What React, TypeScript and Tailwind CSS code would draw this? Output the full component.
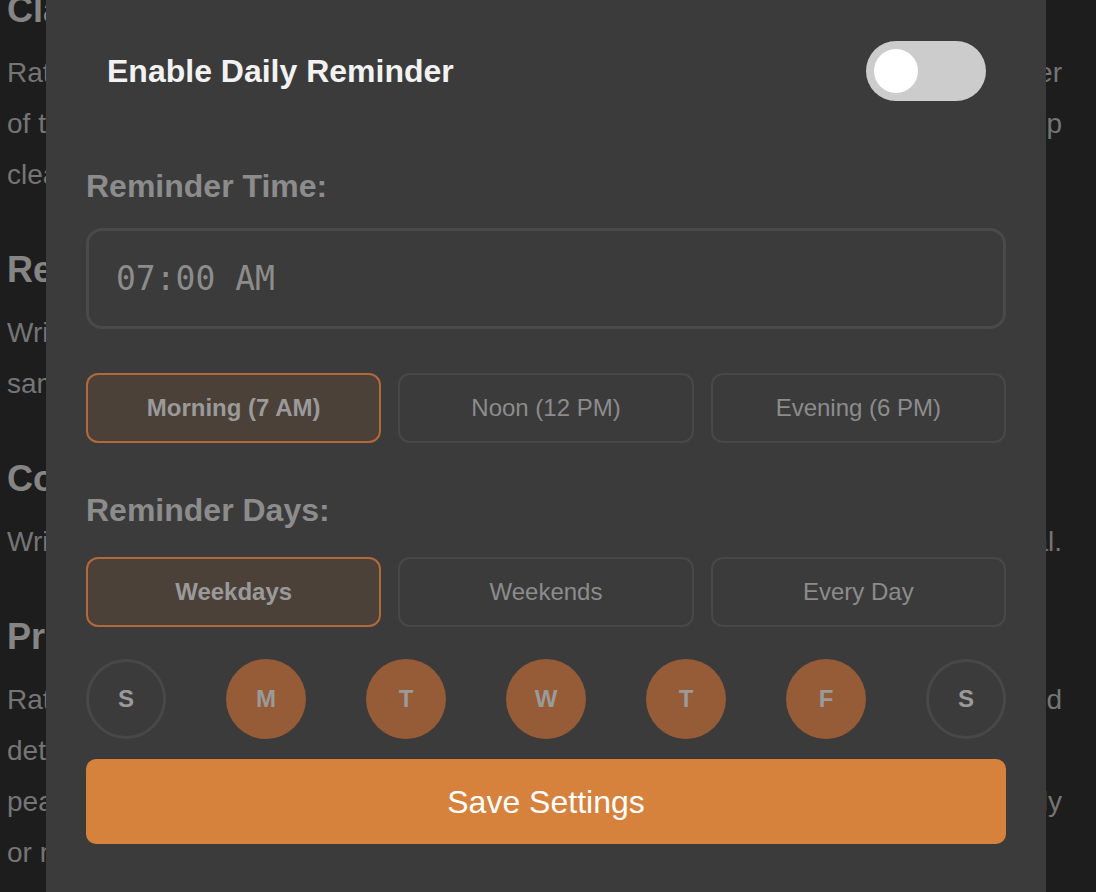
import { useState } from "react";

const PRESET_TIMES = ["Morning (7 AM)", "Noon (12 PM)", "Evening (6 PM)"];
const PRESET_DAYS = ["Weekdays", "Weekends", "Every Day"];
const DAYS = [
  { key: "sun", label: "S", on: false },
  { key: "mon", label: "M", on: true },
  { key: "tue", label: "T", on: true },
  { key: "wed", label: "W", on: true },
  { key: "thu", label: "T", on: true },
  { key: "fri", label: "F", on: true },
  { key: "sat", label: "S", on: false },
];

// Page content sitting behind the settings modal.
// `end` is the tail of a line that runs up to the right edge of the column.
const SECTIONS = [
  {
    title: "Clarity",
    lines: [
      { text: "Rate the clarity of your thoughts today, and note if they felt", end: "clearer" },
      { text: "of the day's decisions came easily. A morning journaling routine", end: "can help" },
      { text: "clear the mind before work begins." },
    ],
  },
  {
    title: "Reflection",
    lines: [
      { text: "Write one thing that went well and one thing to improve, at the" },
      { text: "same time every day." },
    ],
  },
  {
    title: "Consistency",
    lines: [{ text: "Write a few lines each day, even on the busy days, to reach your", end: "weekly goal." }],
  },
  {
    title: "Progress",
    lines: [
      { text: "Rate how much progress you made today on your main goals, energy", end: "and" },
      { text: "details that stand out, such as focus or moments of stress, and" },
      { text: "peaceful mornings and productive evenings show up clearly", end: "weekly" },
      { text: "or monthly summaries." },
    ],
  },
];

function Toggle({ on, onChange }: { on: boolean; onChange: (v: boolean) => void }) {
  return (
    <button
      type="button"
      onClick={() => onChange(!on)}
      className={`relative flex h-[60px] w-[120px] items-center rounded-full px-2 ${
        on ? "bg-[#d6823c] justify-end" : "bg-[#cccccc] justify-start"
      }`}
    >
      <span className="block h-[44px] w-[44px] rounded-full bg-white" />
    </button>
  );
}

function PresetButton({ label, active, onClick }: { label: string; active: boolean; onClick: () => void }) {
  return (
    <button
      type="button"
      onClick={onClick}
      className={`flex h-[70px] items-center justify-center rounded-[12px] border-2 text-[24px] ${
        active
          ? "border-[#b1693a] bg-[#4c4139] font-bold text-[#9a9a9a]"
          : "border-[#484848] bg-transparent text-[#8c8c8c]"
      }`}
    >
      {label}
    </button>
  );
}

export default function App() {
  const [enabled, setEnabled] = useState(false);
  const [time, setTime] = useState(0);
  const [dayPreset, setDayPreset] = useState(0);

  return (
    <div
      className="relative h-[892px] w-full overflow-hidden bg-[#1d1d1d]"
      style={{ fontFamily: '"Liberation Sans", Arial, sans-serif' }}
    >
      {/* background article */}
      <div className="mt-[-12px] w-[1062px] pl-[7px]">
        {SECTIONS.map((s) => (
          <section key={s.title} className="mb-[48px]">
            <h2 className="text-[36px] font-bold leading-[44px] text-[#858585]">{s.title}</h2>
            <div className="mt-[15px]">
              {s.lines.map((l, i) => (
                <p
                  key={i}
                  className="flex justify-between gap-2 whitespace-nowrap text-[28px] leading-[51px] text-[#757575]"
                >
                  <span>{l.text}</span>
                  {l.end && <span>{l.end}</span>}
                </p>
              ))}
            </div>
          </section>
        ))}
      </div>

      {/* settings modal */}
      <div className="absolute left-[46px] top-0 flex h-full w-[1000px] flex-col bg-[#3b3b3b] px-10 pt-[41px]">
        <div className="flex h-[60px] items-center justify-between pl-[21px] pr-5">
          <span className="text-[32px] font-bold leading-[40px] text-[#f2f2f2]">Enable Daily Reminder</span>
          <Toggle on={enabled} onChange={setEnabled} />
        </div>

        <h3 className="mt-[65px] text-[32px] font-bold leading-[40px] text-[#8c8c8c]">Reminder Time:</h3>
        <div className="mt-[22px] flex h-[101px] items-center rounded-[16px] border-[3px] border-[#4a4a4a] pl-[27px]">
          <span
            className="text-[33px] text-[#8c8c8c]"
            style={{ fontFamily: '"DejaVu Sans Mono", "Liberation Mono", monospace' }}
          >
            07:00 AM
          </span>
        </div>

        <div className="mt-[44px] grid grid-cols-3 gap-[17px]">
          {PRESET_TIMES.map((t, i) => (
            <PresetButton key={t} label={t} active={time === i} onClick={() => setTime(i)} />
          ))}
        </div>

        <h3 className="mt-[47px] text-[32px] font-bold leading-[40px] text-[#8c8c8c]">Reminder Days:</h3>
        <div className="mt-[27px] grid grid-cols-3 gap-[17px]">
          {PRESET_DAYS.map((d, i) => (
            <PresetButton key={d} label={d} active={dayPreset === i} onClick={() => setDayPreset(i)} />
          ))}
        </div>

        <div className="mt-[32px] flex justify-between">
          {DAYS.map((d) => (
            <div
              key={d.key}
              className={`flex h-[80px] w-[80px] items-center justify-center rounded-full text-[24px] font-bold text-[#9a9a9a] ${
                d.on ? "bg-[#965c37]" : "border-[3px] border-[#484848]"
              }`}
            >
              {d.label}
            </div>
          ))}
        </div>

        <button
          type="button"
          className="mt-[20px] flex h-[85px] items-center justify-center rounded-[10px] bg-[#d6823c] text-[32px] text-white"
        >
          Save Settings
        </button>
      </div>
    </div>
  );
}
